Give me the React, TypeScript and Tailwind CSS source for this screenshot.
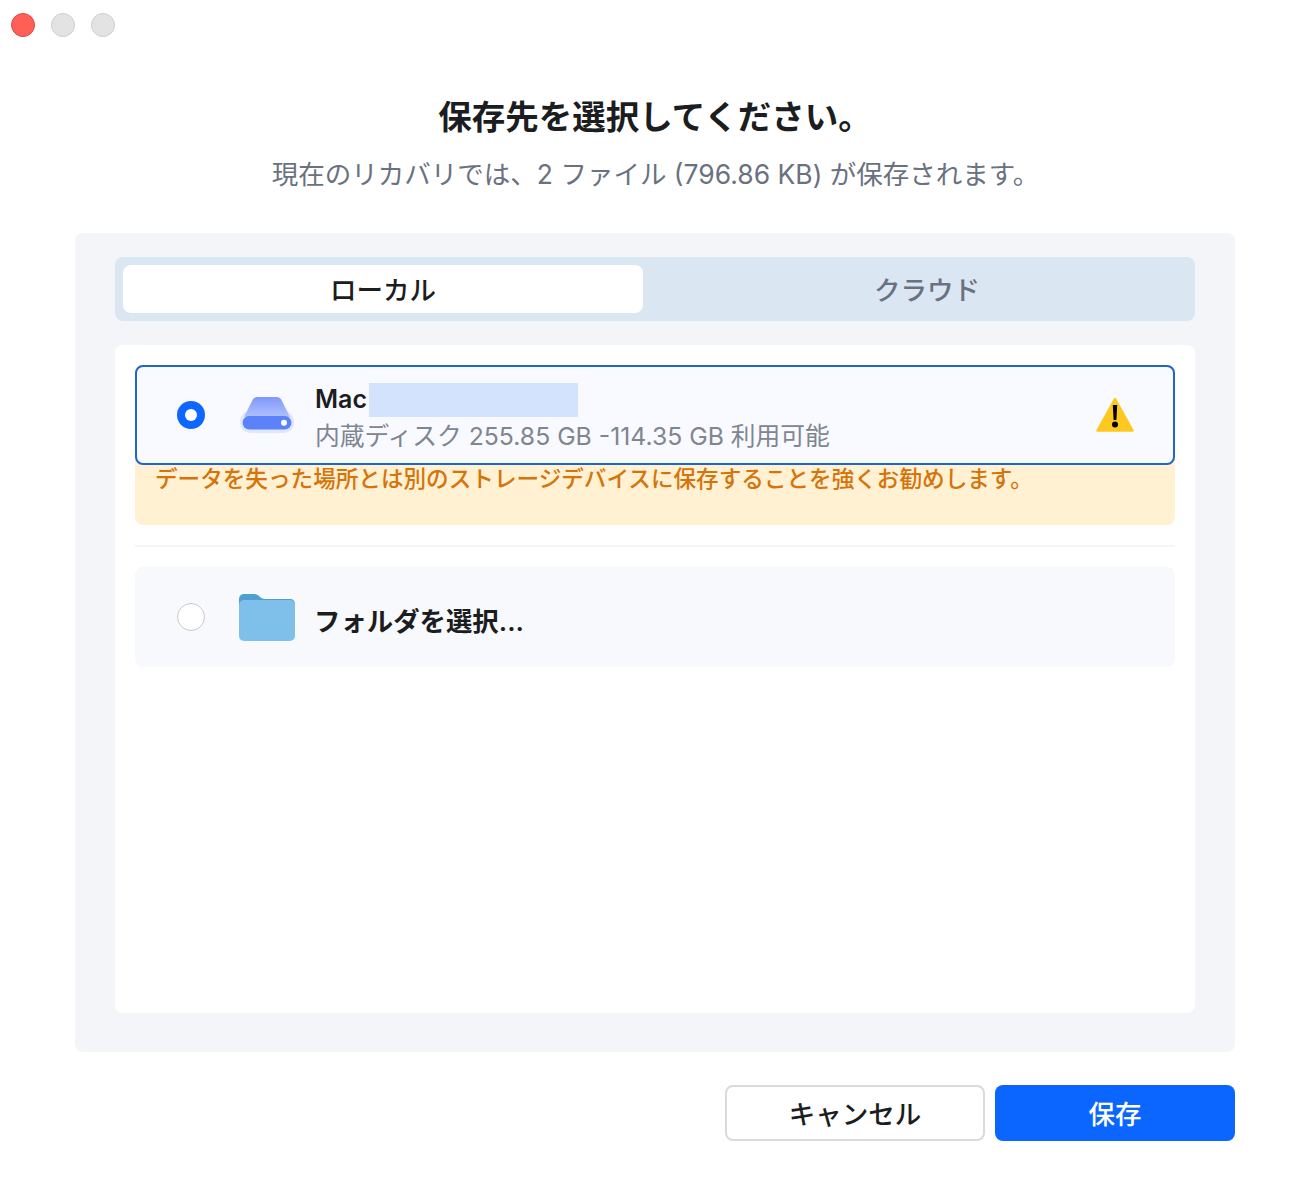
const font = { fontFamily: '"Inter","Noto Sans CJK JP",sans-serif' };

function DriveIcon() {
  return (
    <svg width="54" height="36" viewBox="0 0 54 36" fill="none">
      <defs>
        <linearGradient id="driveTop" x1="0" y1="0" x2="0" y2="1">
          <stop offset="0" stopColor="#7f99fa" />
          <stop offset="1" stopColor="#afc0fe" />
        </linearGradient>
      </defs>
      <rect x="0" y="14" width="54" height="22" rx="10" fill="#dfe7ff" />
      <path d="M12 4C13 1.5 15 0 18 0H36C39 0 41 1.5 42 4L50 20H4Z" fill="url(#driveTop)" />
      <rect x="2.5" y="19" width="49" height="13.5" rx="6.75" fill="#5b82f8" />
      <circle cx="44" cy="25.7" r="3" fill="#fff" />
    </svg>
  );
}

function FolderIcon() {
  return (
    <svg width="56" height="47" viewBox="0 0 56 47" fill="none">
      <path d="M0 6C0 2 2 0 5 0H14C17 0 19 1 20.5 2.5C22 4 23.5 5 26 5H51C54 5 56 7 56 10V18H0Z" fill="#4f9fd3" />
      <rect x="0" y="6" width="56" height="41" rx="5" fill="#7fc0ea" />
    </svg>
  );
}

function WarningIcon() {
  return (
    <svg width="38" height="35" viewBox="0 0 38 35" fill="none">
      <path d="M19 2L36.5 33.5H1.5Z" fill="#fdc921" stroke="#fdc921" strokeWidth="2.5" strokeLinejoin="round" />
      <path d="M16.8 8H21.2L20.4 23H17.6Z" fill="#000" />
      <circle cx="19" cy="27.5" r="3" fill="#000" />
    </svg>
  );
}

export default function App() {
  return (
    <div className="w-[1310px] h-[1188px] bg-white flex flex-col overflow-hidden" style={font}>
      <div className="flex gap-[16px] pl-[11px] pt-[13px] h-[38px] shrink-0">
        <span className="w-[24px] h-[24px] rounded-full bg-[#fe5f57] border border-[#e2463f]" />
        <span className="w-[24px] h-[24px] rounded-full bg-[#e3e3e3] border border-[#cfcfcf]" />
        <span className="w-[24px] h-[24px] rounded-full bg-[#e3e3e3] border border-[#cfcfcf]" />
      </div>

      <h1 className="mt-[57px] h-[44px] leading-[44px] text-center text-[33.5px] font-semibold text-[#1b1d21]">
        保存先を選択してください。
      </h1>
      <p className="mt-[20px] pl-[1px] h-[30px] leading-[30px] text-center text-[26.5px] text-[#6a7180]">
        現在のリカバリでは、2 ファイル (796.86 KB) が保存されます。
      </p>

      <div className="mt-[44px] mx-[75px] h-[819px] shrink-0 rounded-[8px] bg-[#f3f5f9] px-[40px] pt-[24px]">
        <div className="h-[64px] rounded-[8px] bg-[#dbe6f3] p-[8px] flex">
          <div className="w-[520px] h-[48px] pt-[4px] rounded-[8px] bg-white flex items-center justify-center text-[26.5px] font-medium text-[#1b1d21]">
            ローカル
          </div>
          <div className="flex-1 pt-[4px] flex items-center justify-center text-[26.5px] font-medium text-[#6a7180] pl-[24px]">
            クラウド
          </div>
        </div>

        <div className="mt-[24px] h-[668px] rounded-[8px] bg-white px-[20px] pt-[20px]">
          <div className="rounded-[8px] bg-[#fff1d2] h-[160px]">
            <div className="h-[100px] rounded-[8px] border-2 border-[#1f66c9] bg-[#f8faff] flex items-center pl-[40px] pr-[39px]">
              <span className="w-[28px] h-[28px] rounded-full bg-[#0f66ff] flex items-center justify-center shrink-0">
                <span className="w-[12px] h-[12px] rounded-full bg-white" />
              </span>
              <span className="ml-[35px] shrink-0 flex"><DriveIcon /></span>
              <div className="ml-[21px] flex-1 pt-[6px]">
                <div className="h-[34px] flex items-center">
                  <span className="text-[25px] font-semibold text-[#1b1d21]">Mac</span>
                  <span className="ml-[2px] w-[209px] h-[34px] bg-[#d3e3fd]" />
                </div>
                <div className="mt-[2px] text-[24.75px] leading-[34px] text-[#808590]">内蔵ディスク 255.85 GB -114.35 GB 利用可能</div>
              </div>
              <span className="flex -mt-[2px]"><WarningIcon /></span>
            </div>
            <p className="pl-[20px] text-[22.6px] leading-[28px] font-medium text-[#d6730a]">
              データを失った場所とは別のストレージデバイスに保存することを強くお勧めします。
            </p>
          </div>

          <div className="mt-[20px] h-[2px] bg-[#f3f5f9]" />

          <div className="mt-[20px] h-[100px] rounded-[8px] bg-[#f8f9fd] flex items-center pl-[42px]">
            <span className="w-[28px] h-[28px] rounded-full bg-white border border-[#c9c9c9] shrink-0" />
            <span className="ml-[34px] shrink-0 flex"><FolderIcon /></span>
            <span className="ml-[19px] mt-[10px] text-[26.4px] font-semibold text-[#1b1d21]">フォルダを選択...</span>
          </div>
        </div>
      </div>

      <div className="mt-[33px] mr-[75px] flex justify-end gap-[10px]">
        <button className="w-[260px] h-[56px] pt-[4px] rounded-[8px] bg-white border-2 border-[#d8dade] text-[26.5px] font-medium text-[#1b1d21]">
          キャンセル
        </button>
        <button className="w-[240px] h-[56px] pt-[4px] rounded-[8px] bg-[#0a66ff] text-[26.5px] font-medium text-white">
          保存
        </button>
      </div>
    </div>
  );
}
